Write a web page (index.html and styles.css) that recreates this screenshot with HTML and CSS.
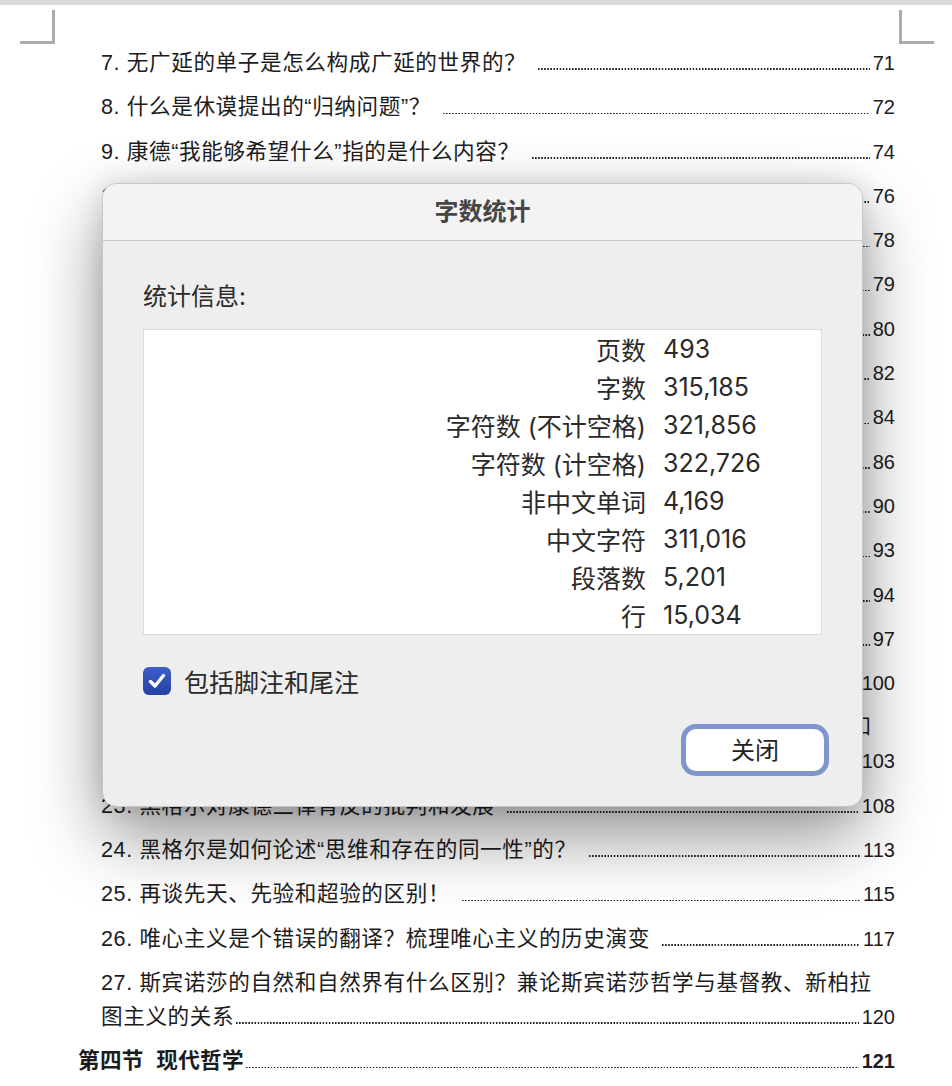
FILE: index.html
```html
<!DOCTYPE html>
<html lang="zh-CN">
<head>
  <meta charset="UTF-8" />
  <meta name="viewport" content="width=device-width, initial-scale=1" />
  <title>字数统计</title>
  <link rel="stylesheet" href="styles.css">
</head>
<body>
<div class="top-band"></div>

<div class="page">
  <div class="corners">
    <span class="corner corner-left"></span>
    <span class="corner corner-right"></span>
  </div>

  <ol class="toc">
    <li class="toc-row"><span class="title">7. 无广延的单子是怎么构成广延的世界的？</span><span class="leader"></span><span class="num">71</span></li>
    <li class="toc-row"><span class="title">8. 什么是休谟提出的“归纳问题”？</span><span class="leader"></span><span class="num">72</span></li>
    <li class="toc-row"><span class="title">9. 康德“我能够希望什么”指的是什么内容？</span><span class="leader"></span><span class="num">74</span></li>
    <li class="toc-row"><span class="title">10. 如何理解黑格尔的“绝对精神”？</span><span class="leader"></span><span class="num">76</span></li>
    <li class="toc-row"><span class="title">11. 莱布尼茨的充足理由律是什么？</span><span class="leader"></span><span class="num">78</span></li>
    <li class="toc-row"><span class="title">12. 贝克莱“存在就是被感知”如何理解？</span><span class="leader"></span><span class="num">79</span></li>
    <li class="toc-row"><span class="title">13. 笛卡尔的“我思故我在”到底在说什么？</span><span class="leader"></span><span class="num">80</span></li>
    <li class="toc-row"><span class="title">14. 斯宾诺莎的“实体”指的是什么？</span><span class="leader"></span><span class="num">82</span></li>
    <li class="toc-row"><span class="title">15. 洛克的“白板说”与天赋观念之争</span><span class="leader"></span><span class="num">84</span></li>
    <li class="toc-row"><span class="title">16. 康德的“哥白尼式革命”指的是什么？</span><span class="leader"></span><span class="num">86</span></li>
    <li class="toc-row"><span class="title">17. 什么是先天综合判断？</span><span class="leader"></span><span class="num">90</span></li>
    <li class="toc-row"><span class="title">18. 康德的“物自体”是什么？</span><span class="leader"></span><span class="num">93</span></li>
    <li class="toc-row"><span class="title">19. 如何理解康德的“绝对命令”？</span><span class="leader"></span><span class="num">94</span></li>
    <li class="toc-row"><span class="title">20. 费希特的“自我”与“非我”是什么关系？</span><span class="leader"></span><span class="num">97</span></li>
    <li class="toc-row"><span class="title">21. 谢林的同一哲学讲了什么？</span><span class="leader"></span><span class="num">100</span></li>
    <li class="toc-item">
      <div class="wrap-line">22. 黑格尔的辩证法与康德的二律背反有什么联系？兼论德国古典哲学的思想和</div>
      <div class="toc-row"><span class="title">先验辩证论的关系</span><span class="leader"></span><span class="num">103</span></div>
    </li>
    <li class="toc-row"><span class="title">23. 黑格尔对康德三律背反的批判和发展</span><span class="leader"></span><span class="num">108</span></li>
    <li class="toc-row"><span class="title">24. 黑格尔是如何论述“思维和存在的同一性”的？</span><span class="leader"></span><span class="num">113</span></li>
    <li class="toc-row"><span class="title">25. 再谈先天、先验和超验的区别！</span><span class="leader"></span><span class="num">115</span></li>
    <li class="toc-row"><span class="title">26. 唯心主义是个错误的翻译？梳理唯心主义的历史演变</span><span class="leader"></span><span class="num">117</span></li>
    <li class="toc-item">
      <div class="wrap-line">27. 斯宾诺莎的自然和自然界有什么区别？兼论斯宾诺莎哲学与基督教、新柏拉</div>
      <div class="toc-row"><span class="title">图主义的关系</span><span class="leader"></span><span class="num">120</span></div>
    </li>
    <li class="toc-row section"><span class="title">第四节&nbsp; 现代哲学</span><span class="leader"></span><span class="num">121</span></li>
  </ol>
</div>

<div class="dialog" role="dialog" aria-label="字数统计">
  <div class="dialog-title">字数统计</div>
  <div class="dialog-body">
    <div class="stats-heading">统计信息:</div>
    <div class="stats">
      <span class="stat-label">页数</span><span class="stat-value">493</span>
      <span class="stat-label">字数</span><span class="stat-value">315,185</span>
      <span class="stat-label">字符数 (不计空格)</span><span class="stat-value">321,856</span>
      <span class="stat-label">字符数 (计空格)</span><span class="stat-value">322,726</span>
      <span class="stat-label">非中文单词</span><span class="stat-value">4,169</span>
      <span class="stat-label">中文字符</span><span class="stat-value">311,016</span>
      <span class="stat-label">段落数</span><span class="stat-value">5,201</span>
      <span class="stat-label">行</span><span class="stat-value">15,034</span>
    </div>
    <label class="check-row">
      <span class="checkbox">
        <svg width="28" height="28" viewBox="0 0 28 28" aria-hidden="true">
          <path d="M7.5 14.5 L12 19 L20.5 8.5" fill="none" stroke="#fff" stroke-width="3.4" stroke-linecap="round" stroke-linejoin="round"/>
        </svg>
      </span>
      <span>包括脚注和尾注</span>
    </label>
    <div class="button-row">
      <button class="close-btn">关闭</button>
    </div>
  </div>
</div>
</body>
</html>
```

FILE: styles.css
```css
body {
  margin: 0;
  background: #fff;
  color: #1c1c1c;
  font-family: "Liberation Sans", "Noto Sans CJK SC", sans-serif;
}
.top-band {
  height: 5px;
  background: #d9d9d9;
}
.page {
  width: 952px;
}
.corners {
  display: flex;
  justify-content: space-between;
  padding-top: 5px;
}
.corner {
  width: 32px;
  height: 31px;
  border-bottom: 3px solid #ababab;
}
.corner-left {
  margin-left: 20px;
  border-right: 3px solid #ababab;
}
.corner-right {
  margin-right: 18px;
  border-left: 3px solid #ababab;
}

/* table of contents */
.toc {
  list-style: none;
  margin: 2px 0 0;
  padding: 0 57px 0 101px;
  display: flex;
  flex-direction: column;
  gap: 10.3px;
  font-size: 21.6px;
  letter-spacing: 0.6px;
  line-height: 34px;
}
.toc-row {
  display: flex;
  align-items: baseline;
}
.toc-row .title,
.wrap-line {
  white-space: nowrap;
}
.leader {
  flex: 1;
  height: 2px;
  margin: 0 3px 0 12px;
  background: linear-gradient(to right, #222 1.5px, transparent 1.5px) left bottom / 3.1px 1.7px repeat-x;
}
.toc-item .leader {
  margin-left: 2px;
}
.num {
  font-size: 20px;
  letter-spacing: 0;
}
.section {
  margin-left: -23px;
  font-weight: bold;
  letter-spacing: 0.3px;
}
.section .leader {
  margin-left: 2px;
}

/* word count dialog */
.dialog {
  position: absolute;
  left: 102px;
  top: 183px;
  width: 761px;
  height: 624px;
  box-sizing: border-box;
  background: #efeeee;
  border: 1px solid #c6c6c6;
  border-radius: 15px;
  box-shadow: 0 30px 70px rgba(0,0,0,0.42), 0 0 24px rgba(0,0,0,0.12);
  font-family: "Inter", "Noto Sans CJK SC", sans-serif;
  color: #2a2a2a;
  overflow: hidden;
}
.dialog-title {
  height: 56px;
  line-height: 55px;
  text-align: center;
  background: #f4f3f3;
  border-bottom: 1px solid #c9c9c9;
  font-size: 24px;
  font-weight: bold;
  color: #464646;
}
.dialog-body {
  padding: 0 40px;
  display: flex;
  flex-direction: column;
}
.stats-heading {
  margin-top: 40px;
  font-size: 24px;
  line-height: 32px;
}
.stats {
  margin-top: 16px;
  display: grid;
  grid-template-columns: 502px 1fr;
  grid-auto-rows: 38px;
  column-gap: 17px;
  align-items: center;
  background: #fff;
  border: 1px solid #dcdcdc;
  font-size: 25px;
}
.stat-label {
  text-align: right;
}
.check-row {
  margin-top: 30px;
  display: flex;
  align-items: center;
  gap: 13px;
  height: 32px;
  font-size: 25px;
}
.checkbox {
  width: 28px;
  height: 28px;
  border-radius: 6px;
  background: linear-gradient(#3d5fc9, #2542a3);
  display: flex;
}
.button-row {
  margin-top: 32px;
  display: flex;
  justify-content: flex-end;
  margin-right: -2px;
}
.close-btn {
  width: 138px;
  height: 42px;
  padding: 0 0 4px;
  border: none;
  border-radius: 10px;
  background: #fff;
  box-shadow: 0 0 0 5px #7f95cb;
  font-family: "Inter", "Noto Sans CJK SC", sans-serif;
  font-size: 24px;
  color: #222;
  cursor: pointer;
}
```
